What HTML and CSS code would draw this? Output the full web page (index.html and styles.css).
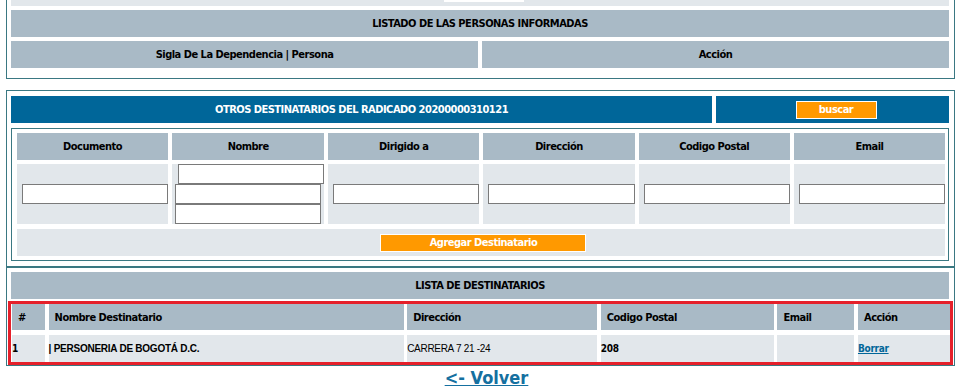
FILE: index.html
```html
<!DOCTYPE html>
<html lang="es">
<head>
    <meta charset="UTF-8">
    <title>Otros destinatarios</title>
    <link rel="stylesheet" href="styles.css">
</head>
<body>
<div class="page">

    <div class="panel informados">
        <div class="cell light top-cell"><span class="stub"></span></div>
        <div class="cell head">LISTADO DE LAS PERSONAS INFORMADAS</div>
        <div class="split">
            <div class="cell head">Sigla De La Dependencia | Persona</div>
            <div class="cell head">Acción</div>
        </div>
    </div>

    <div class="panel otros">
        <div class="title-row">
            <div class="cell blue">OTROS DESTINATARIOS DEL RADICADO 20200000310121</div>
            <div class="cell blue"><button class="btn buscar">buscar</button></div>
        </div>
        <div class="form-box">
            <div class="form-grid">
                <div class="cell head">Documento</div>
                <div class="cell head">Nombre</div>
                <div class="cell head">Dirigido a</div>
                <div class="cell head">Dirección</div>
                <div class="cell head">Codigo Postal</div>
                <div class="cell head">Email</div>

                <div class="cell light field"><input type="text"></div>
                <div class="cell light nombre">
                    <input type="text" class="first">
                    <input type="text">
                    <input type="text">
                </div>
                <div class="cell light field"><input type="text"></div>
                <div class="cell light field"><input type="text"></div>
                <div class="cell light field"><input type="text"></div>
                <div class="cell light field"><input type="text"></div>

                <div class="cell light add-row"><button class="btn agregar">Agregar Destinatario</button></div>
            </div>
        </div>
    </div>

    <div class="panel lista">
        <div class="cell head">LISTA DE DESTINATARIOS</div>
        <div class="marked">
            <div class="list-grid">
                <div class="cell head lh">#</div>
                <div class="cell head lh">Nombre Destinatario</div>
                <div class="cell head lh">Dirección</div>
                <div class="cell head lh">Codigo Postal</div>
                <div class="cell head lh">Email</div>
                <div class="cell head lh">Acción</div>

                <div class="cell light ld">1</div>
                <div class="cell light ld arial-bold">| PERSONERIA DE BOGOTÁ D.C.</div>
                <div class="cell light ld arial">CARRERA 7 21 -24</div>
                <div class="cell light ld">208</div>
                <div class="cell light ld"></div>
                <div class="cell light ld"><a href="#" class="borrar">Borrar</a></div>
            </div>
        </div>
    </div>

    <div class="volver"><a href="#">&lt;- Volver</a></div>
</div>
</body>
</html>
```

FILE: styles.css
```css
body {
    margin: 0;
    background: #fff;
    overflow: hidden;
}
.page {
    margin-left: 6px;
    width: 949px;
    font-family: "DejaVu Sans Condensed", "DejaVu Sans", sans-serif;
    font-stretch: condensed;
    font-size: 11px;
    font-weight: bold;
    letter-spacing: -0.5px;
    color: #000;
}
.panel {
    border: 1px solid #3a7882;
    display: grid;
    row-gap: 4px;
}
.cell {
    display: flex;
    align-items: center;
    justify-content: center;
    height: 27px;
}
.head {
    background: #a9bac6;
}
.light {
    background: #e2e7eb;
}
.blue {
    background: #006699;
    color: #fff;
}

/* personas informadas */
.informados {
    margin-top: -26px;
    padding: 4px 5px 10px 4px;
}
.top-cell {
    align-items: flex-end;
}
.stub {
    width: 80px;
    height: 22px;
    margin: 0 0 4px 7px;
    background: #fff;
}
.split {
    display: grid;
    grid-template-columns: 1fr 1fr;
    column-gap: 4px;
}

/* otros destinatarios */
.otros {
    margin-top: 11px;
    padding: 5px 5px 5px 4px;
    row-gap: 5px;
}
.title-row {
    display: grid;
    grid-template-columns: 701px 233px;
    column-gap: 4px;
}
.btn {
    background: #ff9900;
    border: 1px solid #fff;
    color: #fff;
    font-family: inherit;
    font-stretch: condensed;
    font-weight: bold;
    font-size: 11px;
    letter-spacing: inherit;
    height: 18px;
    padding: 0;
    margin: 0;
}
.buscar {
    width: 81px;
    margin-left: 7px;
}
.agregar {
    width: 206px;
    margin-left: 5px;
}
.form-box {
    border: 1px solid #3a7882;
    padding: 4px 3px 4px 5px;
}
.form-grid {
    display: grid;
    grid-template-columns: repeat(6, 1fr);
    column-gap: 4px;
    row-gap: 4px;
}
.form-grid input {
    display: block;
    box-sizing: border-box;
    height: 20px;
    margin: 0;
    padding: 0;
    border: 1px solid #7a7a7a;
    background: #fff;
}
.field {
    height: 60px;
    padding-left: 5px;
}
.field input {
    width: 100%;
    margin-top: -1px;
}
.nombre {
    height: 60px;
    flex-direction: column;
    align-items: flex-start;
}
.nombre input {
    width: 146px;
    margin-left: 3px;
}
.nombre input.first {
    margin-left: 6px;
}
.add-row {
    grid-column: 1 / -1;
    margin-top: 1px;
}

/* lista */
.lista {
    padding: 4px 5px 0 4px;
    row-gap: 2px;
}
.marked {
    border: 3px solid #e5202a;
    margin: 0 -4px 0 -3px;
    padding-left: 1px;
}
.list-grid {
    display: grid;
    grid-template-columns: 33px 355px 190px 173px 77px 92px;
    column-gap: 3.6px;
    row-gap: 5px;
}
.lh {
    height: 26px;
    justify-content: flex-start;
    padding-left: 6px;
}
.ld {
    justify-content: flex-start;
    font-size: 10px;
    letter-spacing: -0.3px;
}
.arial-bold {
    font-family: "Liberation Sans", Arial, sans-serif;
    font-weight: bold;
    letter-spacing: -0.25px;
}
.arial {
    font-family: "Liberation Sans", Arial, sans-serif;
    font-weight: normal;
    letter-spacing: -0.3px;
}
.borrar {
    color: #006699;
    text-decoration: underline;
}

.volver {
    text-align: center;
    padding-left: 12px;
    padding-top: 1px;
    font-size: 18px;
    line-height: 21px;
    letter-spacing: 0;
}
.volver a {
    color: #1570a0;
    text-decoration: underline;
}
```
